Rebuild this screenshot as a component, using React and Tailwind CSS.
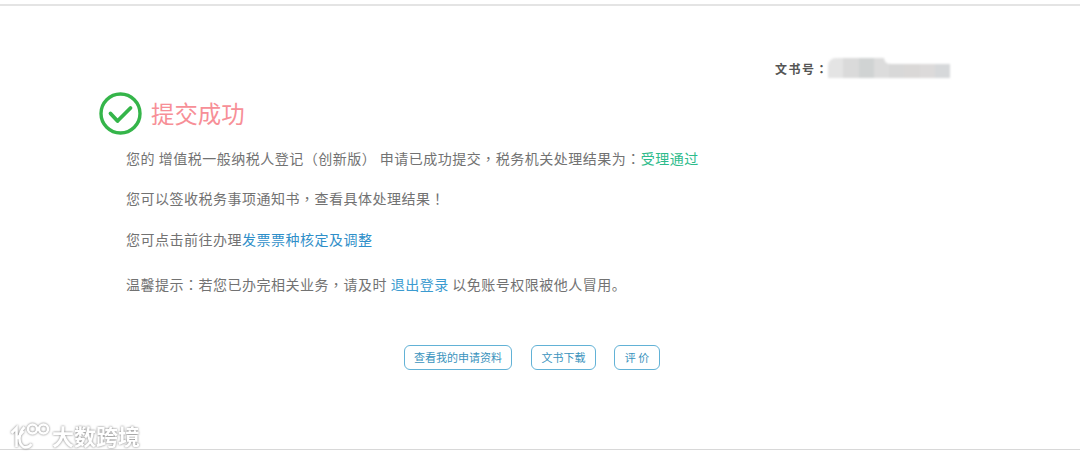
import React from 'react';

const font = { fontFamily: '"Noto Sans CJK SC", "Liberation Sans", sans-serif' };

// pixelated blocks over the document number
const maskBlocks = ['#e4e4e4', '#dadada', '#d0d3d3', '#dcdcdc', '#d8d8d8', '#dad8d7', '#dcdada', '#d6d8da'];

// the TC face centres its full-width punctuation, as the picture does
const P = ({ children }) => <span style={{ fontFamily: '"Noto Sans CJK TC", sans-serif' }}>{children}</span>;

const ActionButton = ({ children, className }) => (
    <button className={`h-[25px] rounded-[6px] border-[1.5px] border-[#62b2d6] bg-white text-[11px] leading-none text-[#3a93bd] ${className}`}>
        {children}
    </button>
);

const App = () => {
    return (
        <div className="relative h-[457px] w-[1080px] overflow-hidden bg-white pt-1 text-[#727272]" style={font}>
            <div className="h-[2px] bg-[#e4e4e4]"></div>

            {/* Doc number */}
            <div className="mt-[51px] flex h-[24px] items-center justify-end pr-[130px]">
                <span className="text-[12px] font-bold tracking-[1.5px] text-[#555555]">文书号<P>：</P></span>
                <div className="-ml-[1px] relative -mt-[2px] flex h-[20px] w-[122px] overflow-hidden rounded-tl-[8px] blur-[1px]">
                    {maskBlocks.map((c, i) => (
                        <div key={i} className="flex-1" style={{ background: c }}></div>
                    ))}
                    <div className="absolute right-0 top-0 h-[6px] w-[66px] rounded-bl-[10px] bg-white"></div>
                </div>
            </div>

            {/* Title */}
            <div className="mt-[11px] ml-[99px] flex items-center gap-[9px]">
                <svg width="43" height="43" viewBox="0 0 43 43" fill="none">
                    <circle cx="21.5" cy="21.5" r="19.5" stroke="#35b54a" strokeWidth="3.4" />
                    <path d="M11.5 21.5 L18.5 29 L31.5 16" stroke="#35b54a" strokeWidth="3.8" strokeLinecap="round" strokeLinejoin="round" />
                </svg>
                <h1 className="text-[23.4px] leading-none text-[#f78f97]">提交成功</h1>
            </div>

            {/* Messages */}
            <div className="ml-[126px] mt-[13px] text-[14px] leading-[20px] tracking-[0.5px]">
                <p>您的 增值税一般纳税人登记<P>（</P>创新版<P>）</P> 申请已成功提交<P>，</P>税务机关处理结果为<P>：</P><span className="text-[#2dbb8b]">受理通过</span></p>
                <p className="mt-[20px]">您可以签收税务事项通知书<P>，</P>查看具体处理结果<P>！</P></p>
                <p className="mt-[21px]">您可点击前往办理<span className="text-[#2f8fc9]">发票票种核定及调整</span></p>
                <p className="mt-[25px]">温馨提示<P>：</P>若您已办完相关业务<P>，</P>请及时 <span className="text-[#3b9bd0]">退出登录</span> 以免账号权限被他人冒用。</p>
            </div>

            {/* Actions */}
            <div className="mt-[51px] ml-[404px] flex">
                <ActionButton className="w-[108px]">查看我的申请资料</ActionButton>
                <ActionButton className="ml-[19px] w-[65px]">文书下载</ActionButton>
                <ActionButton className="ml-[18px] w-[46px]">评 价</ActionButton>
            </div>

            <div className="absolute bottom-[7px] left-0 h-px w-full bg-[#d8d8d8]"></div>

            {/* Watermark */}
            <div className="absolute left-[8px] top-[421px] flex items-center gap-[1px]" style={{ filter: 'drop-shadow(0 0 1px #7a7a7a)' }}>
                <svg width="43" height="28" viewBox="0 0 42 28" fill="none" stroke="#ffffff" strokeWidth="2.6">
                    <path d="M3 12 L8 7 L8 26 M16 6 C10 12 9 22 15 26 C18 27 21 26 23 23 M8 18 L15 10" />
                    <circle cx="24" cy="8" r="4.5" />
                    <circle cx="35" cy="8" r="4.5" />
                </svg>
                <span className="text-[22px] font-bold leading-none text-white">大数跨境</span>
            </div>
        </div>
    );
};

export default App;
